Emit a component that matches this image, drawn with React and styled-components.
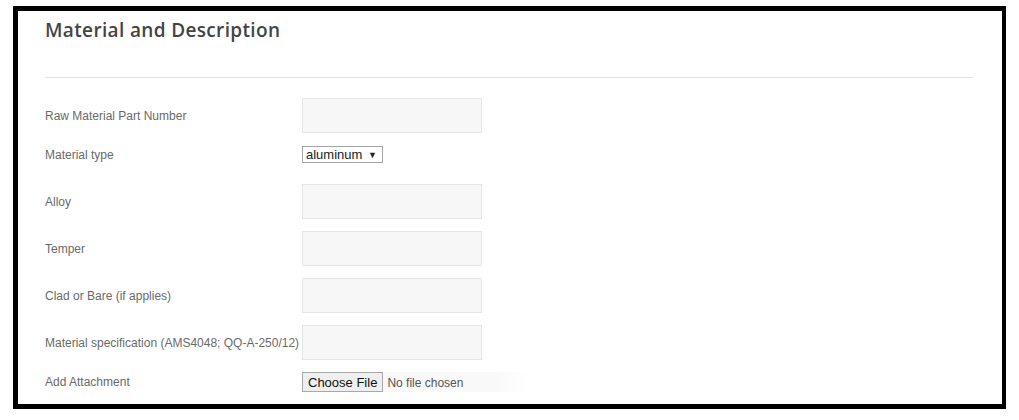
import React from 'react';
import styled, { createGlobalStyle } from 'styled-components';

const GlobalStyle = createGlobalStyle`
    html, body {
        margin: 0;
        padding: 0;
        background: #fff;
    }
    body {
        font-family: "Liberation Sans", Arial, sans-serif;
    }
`;

const Page = styled.div`
    width: 1019px;
    height: 420px;
    padding: 6px 0 0 13px;
    box-sizing: border-box;
`;

const Frame = styled.div`
    width: 993px;
    height: 403px;
    box-sizing: border-box;
    border: 5px solid #000;
    border-right-width: 4px;
    background: #fff;
    padding: 0 29px 0 27px;
    overflow: hidden;
`;

const Heading = styled.h2`
    margin: 0;
    padding-top: 6px;
    height: 60px;
    font-family: "Open Sans", sans-serif;
    font-weight: 600;
    font-size: 19px;
    letter-spacing: 0.35px;
    color: #444;
`;

const Divider = styled.hr`
    margin: 0 0 20px;
    border: 0;
    border-top: 1px solid #e2e2e2;
`;

const Form = styled.form`
    display: flex;
    flex-direction: column;
`;

const Row = styled.div`
    display: flex;
    align-items: center;
    margin: ${p => (p.$tight ? '1px 0 21px' : '0 0 12px')};
`;

const Label = styled.label`
    width: 257px;
    flex-shrink: 0;
    font-size: 12px;
    color: #6a6a6a;
`;

const TextInput = styled.input`
    width: 180px;
    height: 35px;
    box-sizing: border-box;
    border: 1px solid #e6e6e6;
    background: #f7f7f7;
    outline: none;
`;

const SelectBox = styled.div`
    display: inline-flex;
    align-items: center;
    height: 17px;
    box-sizing: border-box;
    border: 1px solid #a5a5a5;
    background: #fff;
    padding: 0 5px 0 3px;
`;

const Select = styled.select`
    appearance: none;
    border: 0;
    padding: 0;
    margin: 0;
    background: transparent;
    font-family: "Liberation Sans", Arial, sans-serif;
    font-size: 13px;
    color: #222;
    outline: none;
`;

const Arrow = styled.span`
    font-size: 9px;
    color: #222;
    margin-left: 5px;
`;

const FileInput = styled.input`
    width: 226px;
    height: 20px;
    font-family: "Liberation Sans", Arial, sans-serif;
    font-size: 12px;
    color: #555;
    background: linear-gradient(to right, #f9f9f9 85%, #fff);

    &::file-selector-button {
        height: 20px;
        font-family: "Liberation Sans", Arial, sans-serif;
        font-size: 13px;
        color: #111;
        background: #efefef;
        border: 1px solid #a8a8a8;
        border-radius: 0;
        padding: 0 5px;
        margin-right: 4px;
    }
`;

const fields = [
    'Raw Material Part Number',
    'Material type',
    'Alloy',
    'Temper',
    'Clad or Bare (if applies)',
    'Material specification (AMS4048; QQ-A-250/12)',
];

function App() {
    return (
        <Page>
            <GlobalStyle />
            <Frame>
                <Heading>Material and Description</Heading>
                <Divider />
                <Form>
                    {fields.map(f =>
                        f === 'Material type' ? (
                            <Row key={f} $tight>
                                <Label>{f}</Label>
                                <SelectBox>
                                    <Select defaultValue="aluminum">
                                        <option value="aluminum">aluminum</option>
                                        <option value="steel">steel</option>
                                        <option value="titanium">titanium</option>
                                    </Select>
                                    <Arrow>▼</Arrow>
                                </SelectBox>
                            </Row>
                        ) : (
                            <Row key={f}>
                                <Label>{f}</Label>
                                <TextInput type="text" />
                            </Row>
                        )
                    )}
                    <Row>
                        <Label>Add Attachment</Label>
                        <FileInput type="file" />
                    </Row>
                </Form>
            </Frame>
        </Page>
    );
}

export default App;
